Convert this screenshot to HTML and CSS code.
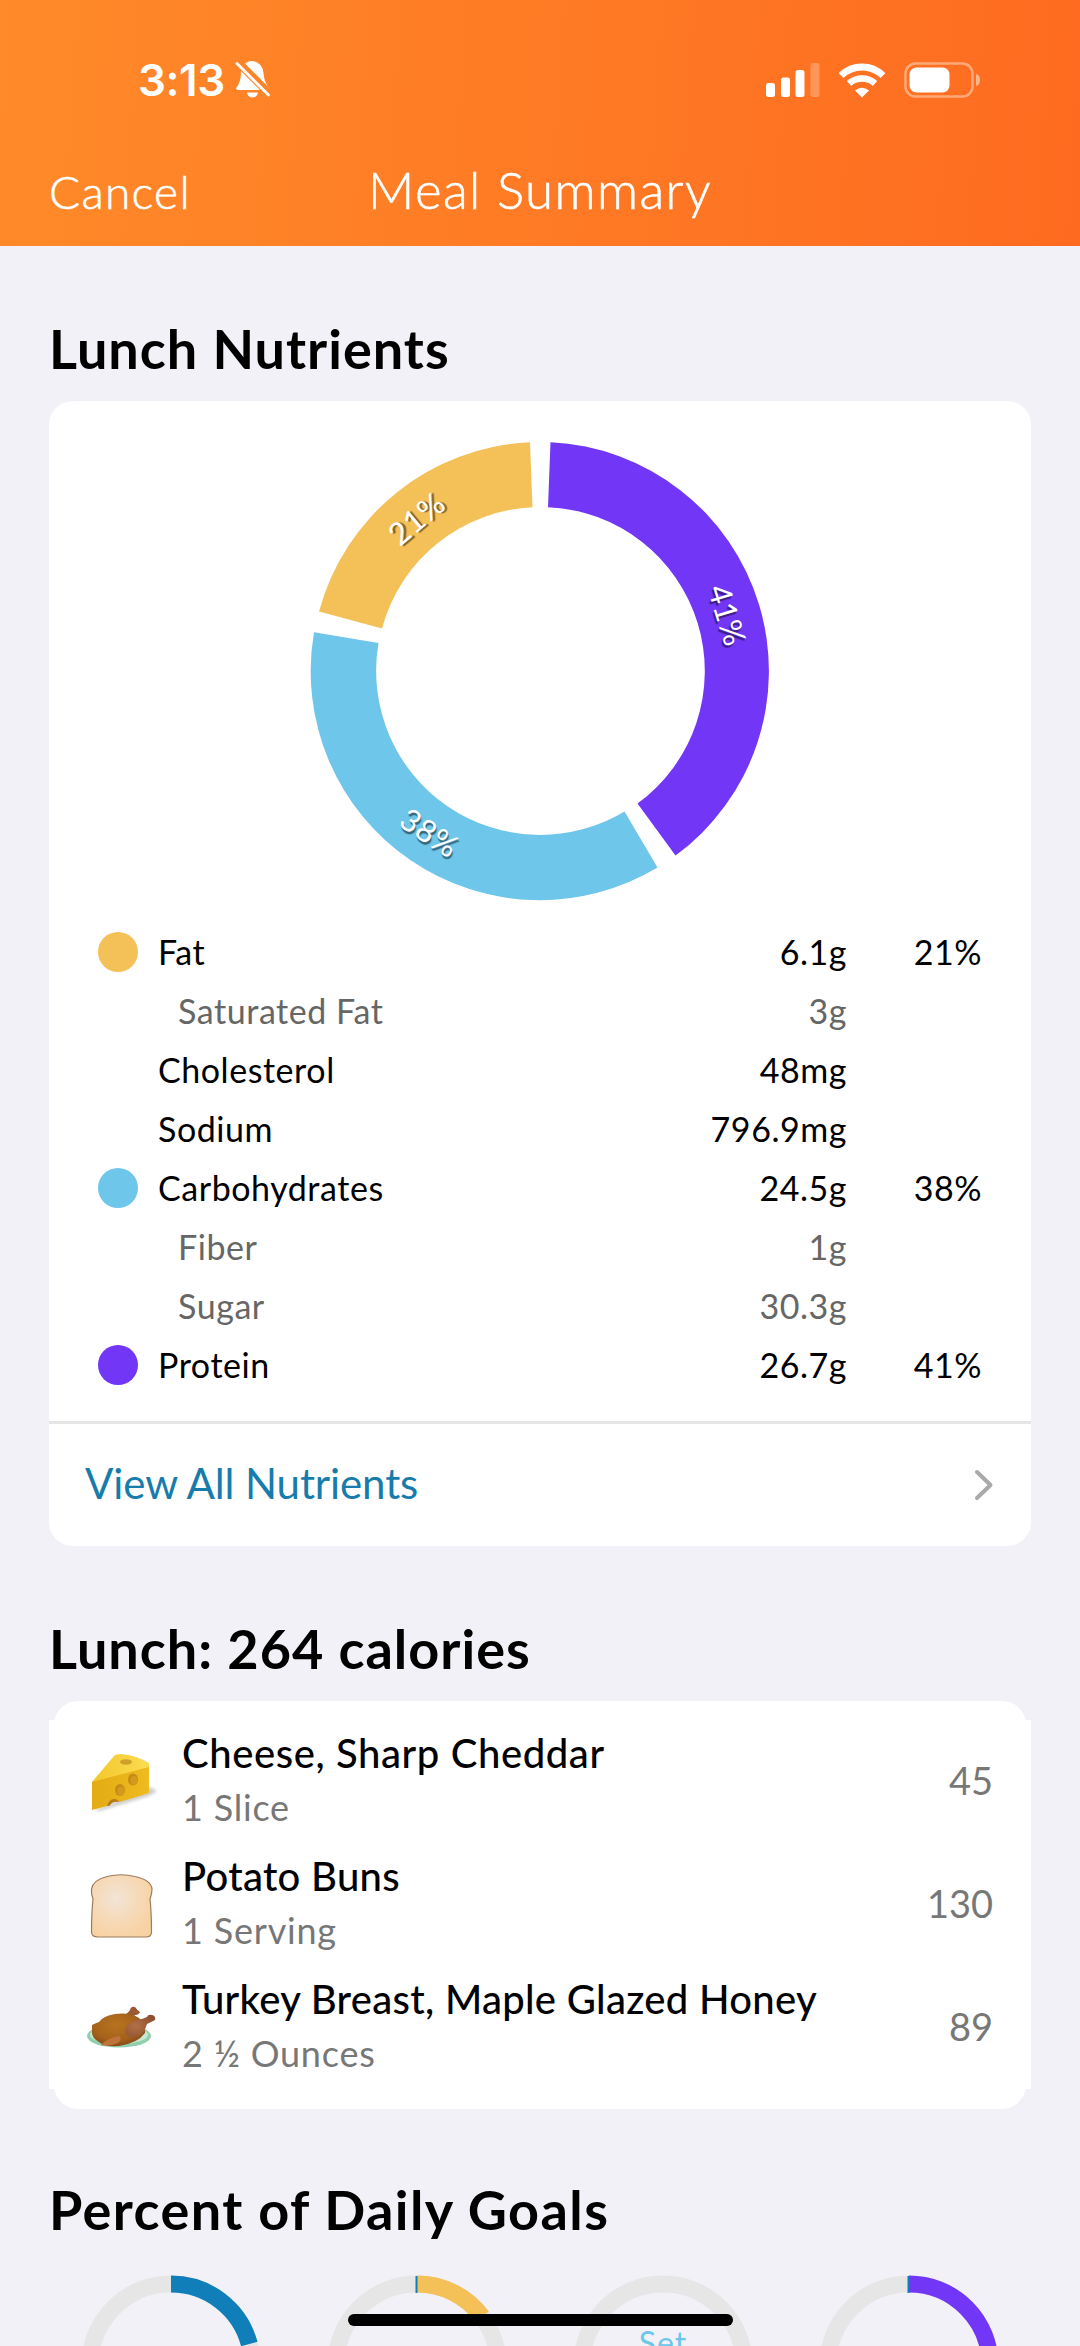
FILE: index.html
```html
<!DOCTYPE html>
<html lang="en">
<head>
    <meta charset="UTF-8">
    <meta name="viewport" content="width=device-width, initial-scale=1.0">
    <title>Meal Summary</title>
    <link rel="stylesheet" href="styles.css">
</head>
<body>
    <header class="header">
        <div class="status-bar">
            <div class="status-left">
                <span class="time">3:13</span>
                <svg class="bell" viewBox="0 0 36 40" width="36" height="40">
                    <path fill="#fff" d="M9 5Q12 1 17 1Q27 2 28.5 13Q29 22 34 28V29Z"/>
                    <path fill="#fff" d="M6 11L25 30H3Q1 30 1 28Q6 23 6 11Z"/>
                    <path fill="#fff" d="M12 32.5H23Q22 37.5 17.5 37.5Q13 37.5 12 32.5Z"/>
                    <path stroke="#fc8426" stroke-width="6.5" d="M4 2L36 34.5"/>
                    <path stroke="#fff" stroke-width="2.8" stroke-linecap="round" d="M2 3.5L33.5 35"/>
                </svg>
            </div>
            <div class="status-right">
                <svg width="54" height="34" viewBox="0 0 54 34" fill="#fff">
                    <rect x="0" y="20" width="9" height="14" rx="2.5"/>
                    <rect x="15" y="14.5" width="9" height="19.5" rx="2.5"/>
                    <rect x="29.5" y="7" width="9" height="27" rx="2.5"/>
                    <rect x="44.5" y="0" width="9" height="34" rx="2.5" opacity=".25"/>
                </svg>
                <svg width="48" height="35" viewBox="0 0 48 35" fill="none" stroke="#fff">
                    <path stroke-width="7" d="M3 12.5Q12 4 24 4T45 12.5"/>
                    <path stroke-width="6.5" d="M11 20.5Q16.5 15.5 24 15.5T37 20.5"/>
                    <path fill="#fff" stroke="none" d="M17 27.5Q24 22 31 27.5L24 34.5Z"/>
                </svg>
                <svg width="77" height="36" viewBox="0 0 77 36">
                    <rect x="1.5" y="1.5" width="67" height="33" rx="10" fill="none" stroke="#fff" stroke-width="2.5" opacity=".4"/>
                    <rect x="5.5" y="5.5" width="40" height="25" rx="7" fill="#fff"/>
                    <path d="M72 12Q76 13 76 18T72 24Z" fill="#fff" opacity=".5"/>
                </svg>
            </div>
        </div>
        <nav class="nav">
            <a class="cancel">Cancel</a>
            <span class="nav-title">Meal Summary</span>
        </nav>
    </header>

    <main>
        <h2 class="title-nutrients">Lunch Nutrients</h2>
        <section class="card">
            <div class="chart">
                <svg class="donut" width="460" height="460" viewBox="-230 -230 460 460">
                    <path fill="#7236f7" d="M10.5 -228.7A229 229 0 0 1 135.5 184.6L97.5 132.5A164 164 0 0 0 8 -163.8Z"/>
                    <path fill="#6ec6ea" d="M117.5 196.5A229 229 0 0 1 -226 -38.8L-161.5 -28A164 164 0 0 0 84.5 140.5Z"/>
                    <path fill="#f4c058" d="M-221 -59.5A229 229 0 0 1 -10 -228.7L-7.5 -163.8A164 164 0 0 0 -158 -42.5Z"/>
                    <text class="donut-label" transform="translate(-124 -153) rotate(-40)">21%</text>
                    <text class="donut-label" transform="translate(188 -56) rotate(73)">41%</text>
                    <text class="donut-label" transform="translate(-110 161) rotate(33)">38%</text>
                </svg>
            </div>
            <div class="nutrients">
                <div class="row"><i class="dot fat"></i><span class="name">Fat</span><span class="amount">6.1g</span><span class="pct">21%</span></div>
                <div class="row sub"><span class="name">Saturated Fat</span><span class="amount">3g</span></div>
                <div class="row"><span class="name">Cholesterol</span><span class="amount">48mg</span></div>
                <div class="row"><span class="name">Sodium</span><span class="amount">796.9mg</span></div>
                <div class="row"><i class="dot carbs"></i><span class="name">Carbohydrates</span><span class="amount">24.5g</span><span class="pct">38%</span></div>
                <div class="row sub"><span class="name">Fiber</span><span class="amount">1g</span></div>
                <div class="row sub"><span class="name">Sugar</span><span class="amount">30.3g</span></div>
                <div class="row"><i class="dot protein"></i><span class="name">Protein</span><span class="amount">26.7g</span><span class="pct">41%</span></div>
            </div>
            <a class="view-all">
                <span class="view-all-text">View All Nutrients</span>
                <svg width="20" height="32" viewBox="0 0 20 32" fill="none" stroke="#a9a9a9" stroke-width="4" stroke-linecap="round" stroke-linejoin="round">
                    <path d="M3 3L16.5 16L3 29"/>
                </svg>
            </a>
        </section>

        <h2 class="title-foods">Lunch: 264 calories</h2>
        <section class="card foods">
            <div class="food-list">
                <div class="food">
                    <svg class="food-icon" width="80" height="80" viewBox="0 0 80 80">
                        <defs>
                            <linearGradient id="cheeseTop" x1="0" x2="1"><stop offset="0" stop-color="#f3c72a"/><stop offset="1" stop-color="#fbdc52"/></linearGradient>
                            <linearGradient id="cheeseSide" x1="0" x2="1"><stop offset="0" stop-color="#e3ab14"/><stop offset="1" stop-color="#eebb20"/></linearGradient>
                            <filter id="soft" x="-20%" y="-50%" width="140%" height="200%"><feGaussianBlur stdDeviation="1.5"/></filter>
                        </defs>
                        <path d="M14 68L70 45L77 49Q70 54 66 55L20 69Z" fill="#bbb" opacity=".7" filter="url(#soft)"/>
                        <path d="M12 40L34 14Q36 12 41 12Q56 13 69 21V26L12 41Z" fill="url(#cheeseTop)"/>
                        <path d="M12 40L69 25V51Q54 56 39 60Q37 57 33 58Q29 58 27 64L12 68Z" fill="url(#cheeseSide)"/>
                        <path d="M27 64Q29 57 34 57Q38 57 39 60Q35 59 32 61L29 64Z" fill="#b57a18"/>
                        <ellipse cx="46" cy="20" rx="6" ry="2.7" fill="#cfa12b"/>
                        <ellipse cx="53" cy="37.5" rx="5" ry="6" fill="#c58b17"/>
                        <ellipse cx="54" cy="38.5" rx="3.500" ry="4.500" fill="#d39b1c"/>
                        <ellipse cx="40" cy="48" rx="5" ry="6" fill="#c58b17"/>
                        <ellipse cx="41" cy="49" rx="3.500" ry="4.500" fill="#d39b1c"/>
                    </svg>
                    <div class="food-text">
                        <div class="food-name wide">Cheese, Sharp Cheddar</div>
                        <div class="food-serving">1 Slice</div>
                    </div>
                    <span class="food-cal">45</span>
                </div>
                <div class="food">
                    <svg class="food-icon" width="80" height="80" viewBox="0 0 80 80">
                        <defs>
                            <radialGradient id="bread" cx=".42" cy=".38" r=".65"><stop offset="0" stop-color="#f2e4d6"/><stop offset=".6" stop-color="#f6d9b6"/><stop offset="1" stop-color="#f8d2a2"/></radialGradient>
                        </defs>
                        <path d="M13 34Q11 29 11.500 24Q13 15 27 11.500Q41 8 55 11.500Q71 15 72 24Q72 29 70 34Q71.500 48 71.500 67Q71.500 72 66 72H18Q11.500 72 11.500 67Q11.500 48 13 34Z" fill="url(#bread)" stroke="#a07a5c" stroke-width="1.200"/>
                    </svg>
                    <div class="food-text">
                        <div class="food-name">Potato Buns</div>
                        <div class="food-serving">1 Serving</div>
                    </div>
                    <span class="food-cal">130</span>
                </div>
                <div class="food">
                    <svg class="food-icon" width="80" height="80" viewBox="0 0 80 80">
                        <defs>
                            <radialGradient id="turkey" cx=".45" cy=".35" r=".7"><stop offset="0" stop-color="#b8731f"/><stop offset=".65" stop-color="#a5611b"/><stop offset="1" stop-color="#7d4415"/></radialGradient>
                            <radialGradient id="leg" cx=".35" cy=".5" r=".7"><stop offset="0" stop-color="#b3704a"/><stop offset="1" stop-color="#8c4d2b"/></radialGradient>
                        </defs>
                        <ellipse cx="39" cy="48" rx="32" ry="11.500" fill="#8fcfae"/>
                        <ellipse cx="39" cy="47" rx="29" ry="9" fill="#c6e9d5"/>
                        <path d="M38 30Q47 27 50 22Q51 18 55 19Q57 22 60 24Q59 27 55 27L50 33Z" fill="#9a5a33"/>
                        <path d="M12 45L12 37Q16 35 19 34Q23 28 35 26Q50 24 59 30Q66 36 65 45Q58 55 39 58Q24 59 19 54Q12 50 12 45Z" fill="url(#turkey)"/>
                        <path d="M45 44Q46 34 57 32Q63 31 67 29Q68 26 72 27Q76 28 75 32Q71 34 67 36Q65 44 59 48Q48 52 45 44Z" fill="url(#leg)"/>
                        <path d="M21 57Q27 50 39 48Q43 51 38 55Q29 59 21 57Z" fill="#bd7339"/>
                    </svg>
                    <div class="food-text">
                        <div class="food-name">Turkey Breast, Maple Glazed Honey</div>
                        <div class="food-serving">2 ½ Ounces</div>
                    </div>
                    <span class="food-cal">89</span>
                </div>
            </div>
        </section>

        <h2 class="title-goals">Percent of Daily Goals</h2>
        <section class="goals">
            <svg class="ring" viewBox="-90 -90 180 180">
                <circle r="81" class="track"/>
                <path d="M0 -81A81 81 0 0 1 78.3 -21" stroke="#107eb8"/>
            </svg>
            <svg class="ring" viewBox="-90 -90 180 180">
                <circle r="81" class="track"/>
                <path d="M0 -81A81 81 0 0 1 65 -48.5" stroke="#f4c058"/>
                <path d="M-.5 -89V-72" class="tick"/>
            </svg>
            <svg class="ring" viewBox="-90 -90 180 180">
                <circle r="81" class="track"/>
                <text x="0" y="-10" text-anchor="middle" class="set">Set</text>
            </svg>
            <svg class="ring" viewBox="-90 -90 180 180">
                <circle r="81" class="track"/>
                <path d="M0 -81A81 81 0 0 1 81 0" stroke="#7236f7"/>
                <path d="M-.5 -89V-72" class="tick"/>
            </svg>
        </section>
    </main>
    <div class="home-indicator"></div>
</body>
</html>
```

FILE: styles.css
```css
:root {
    --orange-left: #ff8a29;
    --orange-right: #fe6b20;
    --page: #f2f1f8;
    --fat: #f4c058;
    --carbs: #6ec6ea;
    --protein: #7236f7;
    --link: #177cab;
}

* {
    box-sizing: border-box;
}

body {
    margin: 0;
    width: 1080px;
    height: 2346px;
    overflow: hidden;
    position: relative;
    background: var(--page);
    color: #000;
    font-family: Lato, "Open Sans", sans-serif;
}

.header {
    height: 246px;
    background: linear-gradient(94deg, var(--orange-left), var(--orange-right));
    color: #fff;
}

.status-bar {
    height: 140px;
    padding: 20px 99px 0 138px;
    display: flex;
    justify-content: space-between;
    align-items: center;
}

.status-left,
.status-right {
    display: flex;
    align-items: center;
}

.status-left {
    gap: 10px;
}

.status-right {
    gap: 18px;
}

.time {
    font-family: Inter, sans-serif;
    font-weight: 600;
    font-size: 44px;
    letter-spacing: -0.5px;
}

.nav {
    height: 106px;
    padding: 0 49px 7px;
    display: grid;
    grid-template-columns: 1fr auto 1fr;
    align-items: center;
    font-weight: 300;
    -webkit-text-stroke: 0.6px #fff;
}

.cancel {
    font-size: 46px;
    letter-spacing: 1.3px;
    padding-top: 3px;
}

.nav-title {
    font-size: 51px;
    letter-spacing: 1.4px;
}

main {
    padding: 0 49px;
}

h2 {
    margin: 0;
    font-size: 54px;
    line-height: 66px;
    font-weight: 700;
    letter-spacing: 1px;
}

.title-nutrients {
    padding-top: 70px;
    height: 155px;
}

.title-foods {
    padding-top: 70px;
    height: 155px;
}

.title-goals {
    padding-top: 68px;
    height: 166px;
    letter-spacing: 1.4px;
}

.card {
    background: #fff;
    border-radius: 24px;
}

.chart {
    padding-top: 40px;
}

.donut {
    display: block;
    margin: 0 auto;
}

.donut-label {
    fill: #fff;
    font-size: 31px;
    letter-spacing: 0.5px;
    text-anchor: middle;
    dominant-baseline: central;
    text-shadow: 2px 2px 1px rgba(0, 0, 0, 0.5);
}

.nutrients {
    padding: 21px 49px 27px;
}

.row {
    height: 59px;
    display: grid;
    grid-template-columns: 60px 1fr 200px 135px;
    align-items: center;
    font-size: 34px;
    letter-spacing: 0.55px;
}

.dot {
    width: 40px;
    height: 40px;
    border-radius: 50%;
}

.fat {
    background: var(--fat);
}

.carbs {
    background: var(--carbs);
}

.protein {
    background: var(--protein);
}

.name {
    grid-column: 2;
}

.amount {
    grid-column: 3;
    text-align: right;
}

.pct {
    grid-column: 4;
    text-align: right;
}

.sub {
    color: #666;
}

.sub .name {
    padding-left: 20px;
}

.view-all {
    height: 125px;
    padding: 0 37px 0 36px;
    border-top: 3px solid #e5e5e5;
    display: flex;
    align-items: center;
    justify-content: space-between;
    color: var(--link);
    font-size: 42px;
    letter-spacing: -0.1px;
}

.view-all-text {
    padding-bottom: 4px;
}

/* the rows are slightly wider than the rounded card behind them */
.foods {
    height: 408px;
    margin: 0 5px;
    padding-top: 19px;
}

.food-list {
    margin: 0 -5px;
    padding: 0 38px 0 31px;
    background: #fff;
}

.food {
    height: 123px;
    display: flex;
    align-items: center;
}

.food-text {
    flex: 1;
    padding: 0 0 4px 22px;
}

.food-name {
    font-size: 40px;
    line-height: 54px;
    font-weight: 500;
    letter-spacing: 0.3px;
}

.wide {
    letter-spacing: 0.6px;
}

.food-serving {
    font-size: 36px;
    line-height: 54px;
    letter-spacing: 0.8px;
    color: #777;
}

.food-cal {
    padding-bottom: 4px;
    font-size: 38px;
    color: #777;
}

.goals {
    display: flex;
    padding: 0 32px;
    gap: 66px;
}

.ring {
    width: 180px;
    height: 180px;
    flex: none;
    fill: none;
    stroke-width: 17;
}

.track {
    stroke: #e6e6e6;
}

.tick {
    stroke: #107eb8;
    stroke-width: 2;
}

.set {
    fill: var(--carbs);
    font-size: 32px;
    letter-spacing: 1px;
}

.home-indicator {
    position: absolute;
    left: 348px;
    bottom: 20px;
    width: 385px;
    height: 12px;
    border-radius: 6px;
    background: #000;
}
```
